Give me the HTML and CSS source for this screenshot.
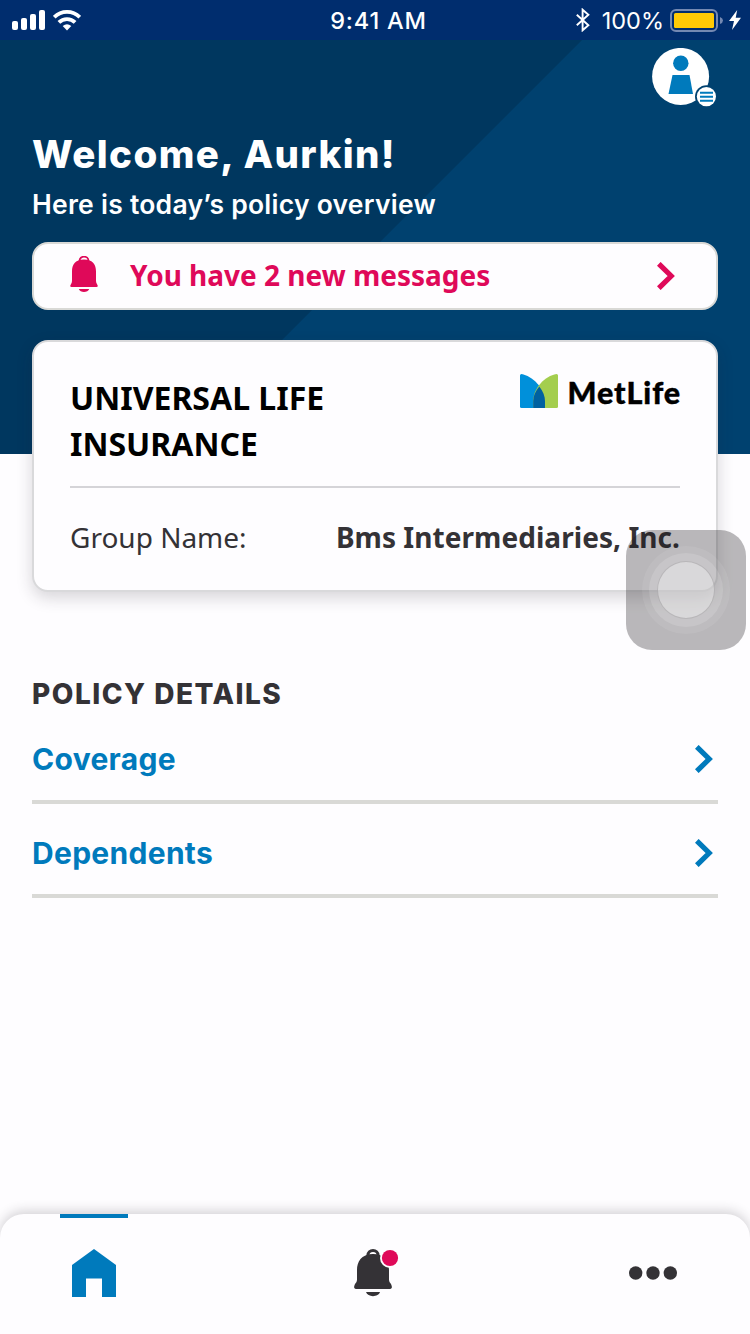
FILE: index.html
```html
<!DOCTYPE html>
<html lang="en">
<head>
<meta charset="utf-8">
<title>Policy overview</title>
<link rel="stylesheet" href="styles.css">
</head>
<body>
<div class="screen">
  <header class="status">
    <div class="status-left">
      <svg width="34" height="22" viewBox="0 0 34 22" fill="#fff"><rect x="0" y="12" width="6" height="9" rx="2"/><rect x="9" y="9" width="6" height="12" rx="2"/><rect x="18" y="5" width="6" height="16" rx="2"/><rect x="27" y="1" width="6" height="20" rx="2"/></svg>
      <svg width="28" height="22" viewBox="0 0 28 22"><g fill="none" stroke="#fff" stroke-width="3.8"><path d="M1.2 8.2A18 18 0 0 1 26.8 8.2"/><path d="M5.9 13.4A11.5 11.5 0 0 1 22.1 13.4"/></g><path d="M14 21.4L9.7 17.1Q14 13.2 18.3 17.1Z" fill="#fff"/></svg>
    </div>
    <span class="time">9:41 AM</span>
    <div class="status-right">
      <svg width="14" height="24" viewBox="0 0 14 24" fill="none" stroke="#fff" stroke-width="1.9"><path d="M.8 6.8L12.4 17.2L6.6 22.3V1.7L12.4 6.8L.8 17.2"/></svg>
      <span class="percent">100%</span>
      <svg class="battery" width="54" height="24" viewBox="0 0 54 24"><rect x="1" y="1" width="46" height="21" rx="5" fill="none" stroke="#7489b2" stroke-width="2"/><rect x="4" y="4" width="40" height="15" rx="1.5" fill="#ffca05"/><path d="M50 8Q53 9.2 53 11.5Q53 13.8 50 15Z" fill="#7489b2"/></svg>
      <svg width="12" height="20" viewBox="0 0 12 20"><path d="M8.2 0L0 11H5L3 20L12 7.8H6.7Z" fill="#fff"/></svg>
    </div>
  </header>

  <section class="hero">
    <div class="profile">
      <svg width="66" height="62" viewBox="0 0 66 62"><circle cx="28.6" cy="28.4" r="28.5" fill="#fff"/><g fill="#007abc"><circle cx="28.8" cy="15.3" r="7.7"/><path d="M20.5 27H37.5L41 46H16.5Z"/></g><circle cx="54.4" cy="48.6" r="11.4" fill="#004270"/><circle cx="54.4" cy="48.6" r="9.6" fill="#fff"/><path d="M48 44.8H61M48 48.8H61M48 52.7H61" stroke="#007abc" stroke-width="1.9"/></svg>
    </div>
    <h1 class="welcome">Welcome, Aurkin!</h1>
    <p class="subtitle">Here is today’s policy overview</p>
    <div class="messages">
      <svg class="bell" width="28" height="37" viewBox="0 0 28 37"><path d="M9.5 5C9.5-.8 18.5-.8 18.5 5" fill="none" stroke="#df0959" stroke-width="1.8"/><path d="M14 3.6C5 3.6 2 9 2 15.5V25Q2 27 .8 28.4Q-.7 31 1.6 31H26.4Q28.7 31 27.2 28.4Q26 27 26 25V15.5C26 9 23 3.6 14 3.6ZM8.8 33H19.2C18 37 10 37 8.8 33Z" fill="#df0959"/></svg>
      <span class="messages-text">You have 2 new messages</span>
      <svg width="18" height="28" viewBox="0 0 18 28"><path d="M1.8 1.8L14.2 14L1.8 26.2" fill="none" stroke="#df0959" stroke-width="5.2"/></svg>
    </div>
  </section>

  <section class="card">
    <div class="card-top">
      <h2 class="product">UNIVERSAL LIFE<br>INSURANCE</h2>
      <div class="brand">
        <svg width="38" height="34" viewBox="0 0 38 34"><path d="M1.5 0C12 2 25 14 25 27V34H1.5Q0 34 0 32.5V1.5Q0 0 1.5 0Z" fill="#0090da"/><path d="M36.5 0C25 2 13.2 14 13.2 27V34H36.5Q38 34 38 32.5V1.5Q38 0 36.5 0Z" fill="#a4ce4e"/><path d="M19.3 12.5C15.5 17 13.2 22 13.2 27V34H25V27C25 22 22.8 17 19.3 12.5Z" fill="#0061a0"/></svg>
        <span class="brand-name">MetLife</span>
      </div>
    </div>
    <div class="group"><span class="group-label">Group Name:</span><span class="group-value">Bms Intermediaries, Inc.</span></div>
    <div class="touch"><span class="ring outer"><span class="ring middle"><span class="ring inner"></span></span></span></div>
  </section>

  <section class="details">
    <h2 class="details-title">POLICY DETAILS</h2>
    <div class="row"><span class="row-label">Coverage</span><svg width="18" height="28" viewBox="0 0 18 28"><path d="M1.8 1.8L14.2 14L1.8 26.2" fill="none" stroke="#007abc" stroke-width="5.2"/></svg></div>
    <div class="row"><span class="row-label">Dependents</span><svg width="18" height="28" viewBox="0 0 18 28"><path d="M1.8 1.8L14.2 14L1.8 26.2" fill="none" stroke="#007abc" stroke-width="5.2"/></svg></div>
  </section>

  <nav class="tabs">
    <div class="tab home"><svg width="44" height="48" viewBox="0 0 44 48"><path d="M0 16L22 0L44 16V48H30V29.5H14V48H0Z" fill="#007abc"/></svg></div>
    <div class="tab alerts"><svg width="46" height="50" viewBox="0 0 46 50"><path d="M13.7 8C13.7 .6 24.3 .6 24.3 8" fill="none" stroke="#343236" stroke-width="3"/><path d="M19 6C7 6 3 14 3 22V32Q3 34 1 36Q-1.5 41 3 41H35Q39.5 41 37 36Q35 34 35 32V22C35 14 31 6 19 6ZM12 44H26C24.5 49.5 13.5 49.5 12 44Z" fill="#343236"/><circle cx="36" cy="10" r="10" fill="#fefdff"/><circle cx="36" cy="10" r="8.1" fill="#df0959"/></svg></div>
    <div class="tab more"><svg width="48" height="14" viewBox="0 0 48 14" fill="#343236"><circle cx="6.7" cy="7" r="6.7"/><circle cx="24" cy="7" r="6.7"/><circle cx="41.3" cy="7" r="6.7"/></svg></div>
  </nav>
</div>
</body>
</html>
```

FILE: styles.css
```css
* { box-sizing: border-box; }
body, h1, h2, p { margin: 0; }
svg { display: block; flex: none; }
.screen {
  width: 750px;
  height: 1334px;
  display: flex;
  flex-direction: column;
  overflow: hidden;
  background: #fefdff;
  font-family: "Noto Sans", sans-serif;
}
.status {
  height: 40px;
  flex: none;
  display: grid;
  grid-template-columns: 1fr auto 1fr;
  align-items: center;
  padding: 0 9px 0 12px;
  background: #002d6e;
  color: #fff;
  font: 24px/40px Inter, sans-serif;
}
.status-left { display: flex; gap: 7px; }
.time { padding: 2px 0 0 4px; font-size: 23.5px; line-height: 38px; font-weight: 500; letter-spacing: .8px; }
.status-right { display: flex; justify-content: flex-end; align-items: center; }
.percent { margin: 0 6px 0 12px; padding-top: 2px; line-height: 38px; font-size: 23.5px; }
.battery { margin: 2px 5px 0 0; }
.hero {
  height: 414px;
  flex: none;
  padding: 8px 32px 0;
  color: #fff;
  background: linear-gradient(135deg, #00375f 411.3px, #00416f 411.9px);
}
.profile { display: flex; justify-content: flex-end; height: 62px; }
.welcome {
  margin-top: 20px;
  height: 48px;
  font: 800 38.5px/49px Inter, sans-serif;
  letter-spacing: 1.4px;
  white-space: nowrap;
}
.subtitle {
  margin-top: 9px;
  height: 36px;
  font: 600 26.5px/35px Inter, sans-serif;
  letter-spacing: .25px;
  white-space: nowrap;
}
.messages {
  display: flex;
  align-items: center;
  height: 68px;
  margin-top: 19px;
  padding: 0 41px 0 36px;
  border: 2px solid #d9d9d6;
  border-radius: 16px;
  background: #fefdff;
  color: #df0959;
}
.bell { margin-top: -4px; }
.messages-text { flex: 1; margin: -2px 0 0 32px; font-size: 28px; font-weight: 700; white-space: nowrap; }
.card {
  position: relative;
  flex: none;
  width: 686px;
  height: 252px;
  margin: -114px 32px 0;
  padding: 32px 36px 0;
  border: 2px solid #d9d9db;
  border-radius: 16px;
  background: #fefdff;
  box-shadow: 0 6px 16px rgba(40, 35, 45, .18);
}
.card-top { display: flex; justify-content: space-between; height: 114px; border-bottom: 2px solid #d5d4d8; }
.product { margin-top: 1px; color: #000; font-size: 32px; line-height: 46px; white-space: nowrap; }
.brand { display: flex; height: 34px; align-items: center; gap: 10px; }
.brand-name { margin-right: -1px; padding-top: 2px; color: #000; font: 900 30.5px/34px Lato, sans-serif; letter-spacing: .9px; -webkit-text-stroke: .4px #000; }
.group { display: flex; justify-content: space-between; margin-top: 29px; color: #343236; font-size: 28px; line-height: 40px; white-space: nowrap; }
.group-value { font-weight: 700; letter-spacing: .05px; }
.touch {
  position: absolute;
  left: 592px;
  top: 188px;
  display: flex;
  align-items: center;
  justify-content: center;
  width: 120px;
  height: 120px;
  border-radius: 26px;
  background: rgba(28, 24, 28, .3);
}
.ring { display: flex; align-items: center; justify-content: center; border-radius: 50%; }
.outer { width: 88px; height: 88px; background: rgba(255, 255, 255, .08); }
.middle { width: 74px; height: 74px; background: rgba(255, 255, 255, .14); }
.inner { width: 58px; height: 58px; border: 1px solid rgba(110, 105, 110, .3); background: rgba(255, 255, 255, .33); }
.details { flex: 1; padding: 82px 32px 0; font-family: Inter, sans-serif; }
.details-title { height: 40px; color: #343236; font-size: 28px; line-height: 41px; font-weight: 800; letter-spacing: 1.5px; }
.row {
  display: flex;
  justify-content: space-between;
  align-items: center;
  height: 94px;
  padding: 8px 5px 0 0;
  border-bottom: 4px solid #d9d9d6;
  color: #007abc;
}
.details-title + .row { height: 90px; padding-top: 4px; }
.row-label { font-size: 30px; line-height: 40px; font-weight: 700; letter-spacing: .3px; }
.tabs {
  display: flex;
  justify-content: space-between;
  flex: none;
  height: 120px;
  padding: 0 63px 0 60px;
  border-radius: 24px 24px 0 0;
  background: #fefdff;
  box-shadow: 0 -3px 12px rgba(40, 35, 45, .2);
}
.tab { display: flex; justify-content: center; width: 68px; }
.home { border-top: 4px solid #007abc; padding-top: 31px; }
.alerts { padding: 34px 0 0 7px; }
.more { padding-top: 52px; }
```
